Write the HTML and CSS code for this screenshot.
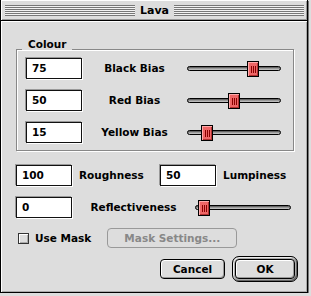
FILE: index.html
```html
<!DOCTYPE html>
<html lang="en">
<head>
    <meta charset="UTF-8">
    <meta name="viewport" content="width=device-width, initial-scale=1.0">
    <title>Lava</title>
    <link rel="stylesheet" href="styles.css">
</head>
<body>

    <div class="window">
        <div class="titlebar">
            <span class="stripes"></span>
            <span class="title">Lava</span>
            <span class="stripes"></span>
        </div>

        <div class="content">
            <div class="group">
                <span class="group-title">Colour</span>
                <div class="field">75</div>
                <div class="label">Black Bias</div>
                <div class="slider"><span class="track"></span><span class="thumb" style="--v: 75"></span></div>

                <div class="field">50</div>
                <div class="label">Red Bias</div>
                <div class="slider"><span class="track"></span><span class="thumb" style="--v: 50"></span></div>

                <div class="field">15</div>
                <div class="label">Yellow Bias</div>
                <div class="slider"><span class="track"></span><span class="thumb" style="--v: 15"></span></div>
            </div>

            <div class="pair-row">
                <div class="field">100</div>
                <div class="label left">Roughness</div>
                <div class="field">50</div>
                <div class="label left">Lumpiness</div>
            </div>

            <div class="reflect-row">
                <div class="field">0</div>
                <div class="label">Reflectiveness</div>
                <div class="slider"><span class="track"></span><span class="thumb" style="--v: 0"></span></div>
            </div>

            <div class="mask-row">
                <span class="checkbox"></span>
                <span class="check-label">Use Mask</span>
                <div class="button disabled">Mask Settings...</div>
            </div>

            <div class="button-row">
                <div class="button cancel">Cancel</div>
                <div class="default-ring">
                    <div class="button ok">OK</div>
                </div>
            </div>
        </div>
    </div>

</body>
</html>
```

FILE: styles.css
```css
* {
    margin: 0;
    padding: 0;
    box-sizing: border-box;
}
body {
    background-color: #dddddd;
    font-family: "DejaVu Sans", Verdana, sans-serif;
    font-weight: bold;
    font-size: 10.5px;
    color: #000;
}
.window {
    width: 308px;
    height: 293px;
    border: 1px solid #000;
    border-top: none;
    background-color: #dddddd;
    box-shadow: 1px 1px 0 #777;
}
.titlebar {
    height: 21px;
    display: flex;
    align-items: flex-start;
    padding: 5px 3px 0 4px;
    border-bottom: 1px solid #000;
    box-shadow: inset 1px 1px 0 #fff, inset -1px -1px 0 #999;
}
.stripes {
    flex: 1;
    height: 11px;
    background: repeating-linear-gradient(to bottom, #777 0 1px, #f2f2f2 1px 2px);
}
.title {
    padding: 0 5px;
    font-size: 11px;
    line-height: 11px;
}
.content {
    height: 271px;
    padding: 28px 9px 0 15px;
    box-shadow: inset 1px 1px 0 #fff, inset -1px -1px 0 #aaa;
}
.group {
    position: relative;
    width: 278px;
    border: 1px solid #888;
    box-shadow: inset 1px 1px 0 #fff, 1px 1px 0 #fff;
    padding: 8px 12px 7px 9px;
    display: grid;
    grid-template-columns: 56px 105px 94px;
    grid-auto-rows: 21px;
    row-gap: 11px;
}
.group-title {
    position: absolute;
    left: 5px;
    top: -12px;
    padding: 0 6px;
    line-height: 12px;
    background-color: #dddddd;
}
.field {
    flex: none;
    width: 56px;
    height: 21px;
    background-color: #fff;
    border: 1px solid #111;
    box-shadow: -1px -1px 0 #999, 1px 1px 0 #fff;
    padding-left: 5px;
    line-height: 19px;
}
.label {
    text-align: center;
    line-height: 21px;
}
.label.left {
    text-align: left;
    padding-left: 7px;
}
.slider {
    position: relative;
    height: 21px;
    display: flex;
    align-items: center;
}
.track {
    width: 100%;
    height: 5px;
    border: 1px solid #000;
    border-radius: 3px;
    background-color: #999;
    box-shadow: inset 0 1px 0 #666, inset 0 -1px 0 #bbb;
}
.thumb {
    position: absolute;
    top: 3px;
    left: calc(3px + (100% - 18px) * var(--v) / 100);
    width: 12px;
    height: 16px;
    border: 1px solid #000;
    background-color: #ee6666;
    box-shadow: inset 1px 1px 0 #ffaaaa, inset -1px -1px 0 #b03030;
}
.thumb::after {
    content: "";
    position: absolute;
    left: 3px;
    top: 4px;
    width: 5px;
    height: 7px;
    background: repeating-linear-gradient(to right, #8a0000 0 1px, transparent 1px 2px);
}
.pair-row {
    display: flex;
    height: 21px;
    margin-top: 14px;
}
.pair-row .label {
    flex: none;
    width: 88px;
}
.reflect-row {
    display: grid;
    grid-template-columns: 56px 123px 96px;
    height: 21px;
    margin-top: 11px;
}
.mask-row {
    display: flex;
    align-items: center;
    height: 20px;
    margin-top: 10px;
}
.checkbox {
    width: 11px;
    height: 11px;
    margin-left: 2px;
    border: 1px solid #333;
    background-color: #ddd;
    box-shadow: inset 1px 1px 0 #fff, inset -1px -1px 0 #aaa;
}
.check-label {
    margin-left: 6px;
}
.button {
    height: 20px;
    border: 1px solid #000;
    border-radius: 4px;
    background-color: #dddddd;
    box-shadow: inset 1px 1px 0 #fff, inset -1px -1px 0 #999;
    text-align: center;
    line-height: 18px;
}
.button.disabled {
    width: 130px;
    margin-left: 16px;
    border-color: #999;
    box-shadow: none;
    color: #888;
}
.button-row {
    display: flex;
    justify-content: flex-end;
    align-items: center;
    gap: 7px;
    margin-top: 8px;
}
.cancel {
    width: 65px;
}
.default-ring {
    border: 1px solid #000;
    border-radius: 7px;
    padding: 2px;
    background-color: #aaa;
    box-shadow: inset 1px 1px 0 #eee, inset -1px -1px 0 #666;
}
.ok {
    width: 60px;
}
```
